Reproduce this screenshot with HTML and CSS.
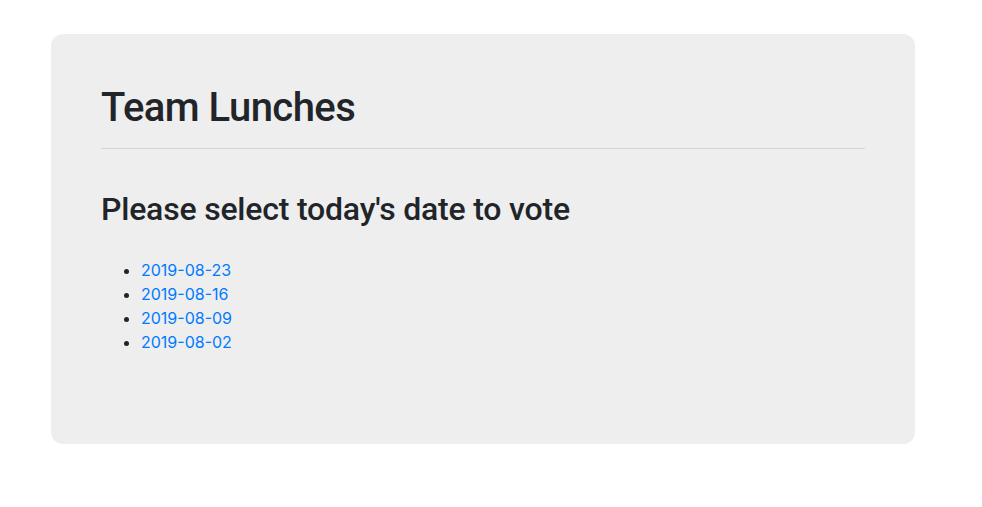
FILE: index.html
```html
<!DOCTYPE html>
<html lang="en">
<head>
<meta charset="utf-8">
<title>Team Lunches</title>
<link rel="stylesheet" href="styles.css">
</head>
<body>
<div class="page">
  <div class="jumbotron">
    <h1 class="title">Team Lunches</h1>
    <hr class="divider">
    <h2 class="subtitle">Please select today's date to vote</h2>
    <ul class="dates">
      <li><a href="#">2019-08-23</a></li>
      <li><a href="#">2019-08-16</a></li>
      <li><a href="#">2019-08-09</a></li>
      <li><a href="#">2019-08-02</a></li>
    </ul>
  </div>
</div>
</body>
</html>
```
FILE: styles.css
```css
html, body {
  margin: 0;
  padding: 0;
  background: #fff;
}
body {
  font-family: Inter, "Noto Sans", sans-serif;
  font-size: 16px;
  line-height: 1.5;
  color: #212529;
}
.page {
  padding: 34px 0 0 51px;
}
.jumbotron {
  width: 864px;
  box-sizing: border-box;
  height: 410px;
  padding: 50px 50px 0;
  background: #eeeeee;
  border-radius: 12px;
}
.title {
  margin: 0 0 8px;
  font-family: Roboto, "Noto Sans", sans-serif;
  font-size: 40px;
  font-weight: 500;
  line-height: 1.2;
  letter-spacing: -0.55px;
}
.divider {
  margin: 16px 0;
  border: 0;
  border-top: 1px solid rgba(0,0,0,0.1);
}
.subtitle {
  margin: 0 0 8px;
  padding-top: 25px;
  font-family: Roboto, "Noto Sans", sans-serif;
  font-size: 32px;
  font-weight: 500;
  line-height: 1.2;
  letter-spacing: -0.2px;
}
.dates {
  margin: 0 0 16px;
  padding-top: 22px;
  padding-left: 40px;
}
.dates a {
  color: #007bff;
  text-decoration: none;
}
```
